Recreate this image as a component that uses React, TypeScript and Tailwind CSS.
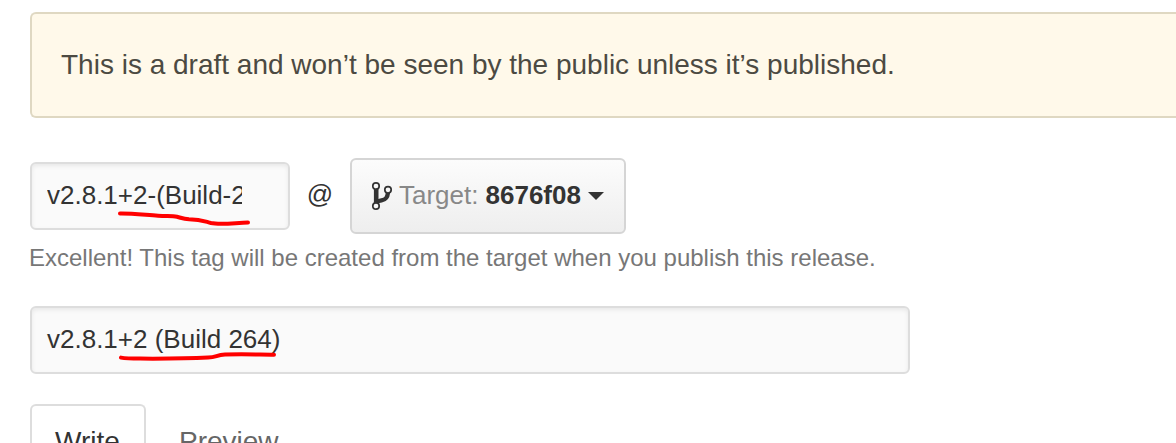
function BranchIcon() {
  return (
    <svg className="h-8 w-5 shrink-0 overflow-visible fill-none stroke-[#333333]" viewBox="0 0 20 32" aria-hidden="true">
      <path d="M4.2 8V24" strokeWidth="4.6" />
      <path d="M16 12.5C15.5 17.5 14 19.6 9.5 20.4C7 20.8 5.6 21.2 4.5 22.6" strokeWidth="4.4" />
      <g className="fill-[#f8f8f8]" strokeWidth="1.7">
        <circle cx="4" cy="6" r="3.2" />
        <circle cx="16" cy="9.8" r="3.2" />
        <circle cx="4" cy="26" r="3.2" />
      </g>
    </svg>
  );
}

function Underlines() {
  return (
    <svg
      className="pointer-events-none absolute top-0 left-0 h-[443px] w-[1176px] fill-none stroke-[#ff0000]"
      viewBox="0 0 1176 443"
      strokeWidth="4"
      strokeLinecap="round"
      strokeLinejoin="round"
      aria-hidden="true"
    >
      <path d="M120 213.5C132 213.3 146 215 158 215.7C167 216.3 172 215.7 177 216.7C182 218 183 219 189 219.2C201 219.3 205 221.5 211 223C220 225 236 222.8 248 222.6" />
      <path d="M121 357.6C126 358.5 130 358.6 140 358.6C160 358.7 190 358.5 208 357.6C217 357.2 216 355 225 354.6C242 354 258 354.6 274 354.7" />
    </svg>
  );
}

const fieldClass =
  "flex h-[68px] items-center rounded-[6px] border-2 border-[#dddddd] bg-[#fafafa] pl-[15px] text-[26px] leading-[38px] text-[#333333] shadow-[inset_0_2px_4px_rgba(0,0,0,0.075)]";

export default function App() {
  return (
    <main className="relative h-[443px] w-full overflow-hidden bg-white pt-3 pl-[30px] font-['Liberation_Sans',Arial,sans-serif]">
      <div className="flex h-[106px] items-center rounded-l-[6px] border-2 border-r-0 border-[#dfd8c2] bg-[#fff9ea] pl-[29px] text-[28px] text-[#4c4a42]">
        <p className="whitespace-nowrap">This is a draft and won’t be seen by the public unless it’s published.</p>
      </div>

      <div className="mt-10 flex h-[76px] items-center text-[26px] text-[#333333]">
        <div className={`${fieldClass} w-[260px] pr-[46px]`}>
          <span className="block w-full overflow-hidden pb-0.5 whitespace-nowrap">v2.8.1+2-(Build-2</span>
        </div>
        <span className="w-[60px] pb-1 text-center">@</span>
        <button className="flex h-[76px] w-[276px] items-center rounded-[6px] border-2 border-[#d5d5d5] bg-linear-to-b from-[#fcfcfc] to-[#eeeeee] pl-5 whitespace-nowrap">
          <BranchIcon />
          <span className="ml-[7px] pb-0.5 text-[#888888]">Target:</span>
          <span className="ml-[7px] pb-0.5 font-bold">8676f08</span>
          <svg className="ml-[7px] h-2 w-4 shrink-0 fill-[#333333]" viewBox="0 0 16 8" aria-hidden="true">
            <path d="M0 0h16L8 8z" />
          </svg>
        </button>
      </div>

      <p className="mt-2 -ml-px text-[24px] leading-8 whitespace-nowrap text-[#777777]">
        Excellent! This tag will be created from the target when you publish this release.
      </p>

      <div className={`${fieldClass} mt-8 w-[880px]`}>
        <span className="pb-0.5 whitespace-nowrap">v2.8.1+2 (Build 264)</span>
      </div>

      <nav className="mt-[30px] flex text-[28px] leading-[36px]">
        <div className="h-[72px] w-[116px] rounded-t-[6px] border-2 border-b-0 border-[#dddddd] bg-white pt-[18px] pr-px text-center text-[#333333]">
          Write
        </div>
        <div className="ml-[33px] pt-5 text-[#666666]">Preview</div>
      </nav>

      <Underlines />
    </main>
  );
}
